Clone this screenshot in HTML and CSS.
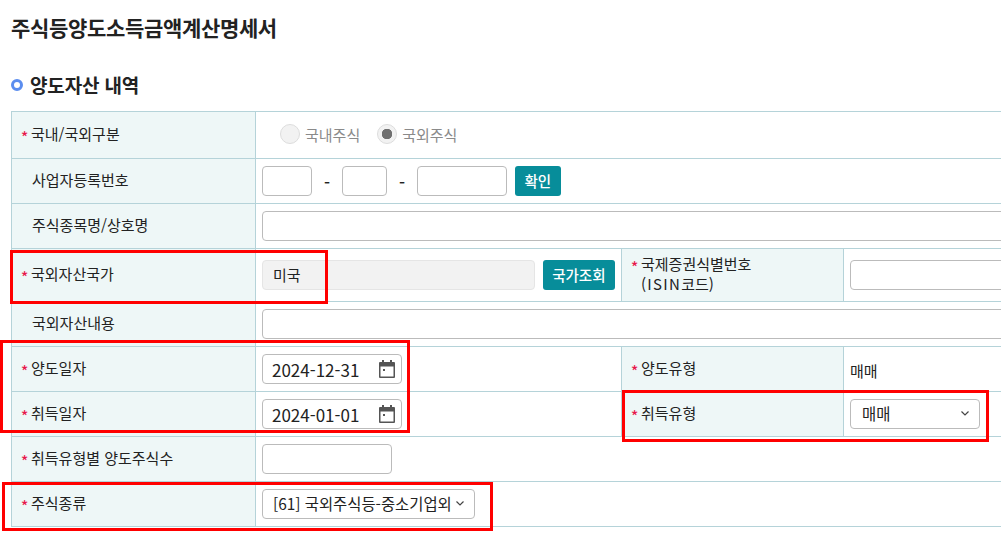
FILE: index.html
```html
<!DOCTYPE html>
<html lang="ko">
<head>
    <meta charset="UTF-8">
    <meta name="viewport" content="width=device-width, initial-scale=1.0">
    <title>주식등양도소득금액계산명세서</title>
    <link rel="stylesheet" href="styles.css">
</head>
<body>
    <h1 class="page-title">주식등양도소득금액계산명세서</h1>
    <h2 class="section-title"><span class="section-dot"></span>양도자산 내역</h2>

    <div class="table-wrap">
    <table class="form-table">
        <colgroup>
            <col class="col-th1">
            <col class="col-td1">
            <col class="col-th2">
            <col>
        </colgroup>
        <tr class="row-first">
            <th><span class="req">*</span>국내/국외구분</th>
            <td colspan="3">
                <div class="radio-group">
                    <label class="radio-item"><input type="radio" name="gubun" disabled>국내주식</label>
                    <label class="radio-item"><input type="radio" name="gubun" checked disabled>국외주식</label>
                </div>
            </td>
        </tr>
        <tr>
            <th class="no-req">사업자등록번호</th>
            <td colspan="3">
                <div class="biz-no">
                    <input class="input w-50" type="text">
                    <span class="dash">-</span>
                    <input class="input w-45" type="text">
                    <span class="dash">-</span>
                    <input class="input w-90" type="text">
                    <button class="btn" type="button">확인</button>
                </div>
            </td>
        </tr>
        <tr>
            <th class="no-req">주식종목명/상호명</th>
            <td colspan="3"><input class="input w-full" type="text"></td>
        </tr>
        <tr class="row-tall">
            <th><span class="req">*</span>국외자산국가</th>
            <td>
                <div class="country">
                    <input class="input input-readonly" type="text" value="미국" readonly>
                    <button class="btn" type="button">국가조회</button>
                </div>
            </td>
            <th class="th-wrap"><span class="req">*</span>국제증권식별번호<br><span class="latin-wide">(ISIN</span>코드)</th>
            <td><input class="input w-full" type="text"></td>
        </tr>
        <tr>
            <th class="no-req">국외자산내용</th>
            <td colspan="3"><input class="input w-full" type="text"></td>
        </tr>
        <tr>
            <th><span class="req">*</span>양도일자</th>
            <td>
                <div class="date-field">
                    <input type="text" value="2024-12-31">
                    <svg width="16" height="18" viewBox="0 0 16 18"><path fill="#555" d="M3 0h2v2h6V0h2v2h2a1 1 0 0 1 1 1v14a1 1 0 0 1-1 1H1a1 1 0 0 1-1-1V3a1 1 0 0 1 1-1h2zM1.500 6.500v10h13v-10z"/><rect x="4" y="9" width="2" height="2" fill="#555"/></svg>
                </div>
            </td>
            <th><span class="req">*</span>양도유형</th>
            <td><span class="plain-value">매매</span></td>
        </tr>
        <tr>
            <th><span class="req">*</span>취득일자</th>
            <td>
                <div class="date-field">
                    <input type="text" value="2024-01-01">
                    <svg width="16" height="18" viewBox="0 0 16 18"><path fill="#555" d="M3 0h2v2h6V0h2v2h2a1 1 0 0 1 1 1v14a1 1 0 0 1-1 1H1a1 1 0 0 1-1-1V3a1 1 0 0 1 1-1h2zM1.500 6.500v10h13v-10z"/><rect x="4" y="9" width="2" height="2" fill="#555"/></svg>
                </div>
            </td>
            <th><span class="req">*</span>취득유형</th>
            <td>
                <div class="select-field w-130">
                    <span>매매</span>
                    <svg width="8" height="5" viewBox="0 0 8 5"><path d="M.5.500L4 4 7.500.500" fill="none" stroke="#444" stroke-width="1.200"/></svg>
                </div>
            </td>
        </tr>
        <tr>
            <th><span class="req">*</span>취득유형별 양도주식수</th>
            <td colspan="3"><input class="input w-130" type="text"></td>
        </tr>
        <tr>
            <th><span class="req">*</span>주식종류</th>
            <td colspan="3">
                <div class="select-field select-wide">
                    <span>[61] 국외주식등-중소기업외</span>
                    <svg width="8" height="5" viewBox="0 0 8 5"><path d="M.5.500L4 4 7.500.500" fill="none" stroke="#444" stroke-width="1.200"/></svg>
                </div>
            </td>
        </tr>
    </table>
    </div>

    <!-- 빨간 표시 박스 -->
    <div class="mark mark-country"></div>
    <div class="mark mark-dates"></div>
    <div class="mark mark-type"></div>
    <div class="mark mark-kind"></div>
</body>
</html>
```

FILE: styles.css
```css
* {
    margin: 0;
    padding: 0;
    box-sizing: border-box;
}

html, body {
    width: 1001px;
    height: 541px;
    overflow: hidden;
}

body {
    position: relative;
    background: #fff;
    color: #222;
    font-family: "Noto Sans CJK KR", "Noto Sans", sans-serif;
    font-size: 15px;
    padding: 13px 0 0 11px;
}

/* Titles */
.page-title {
    font-size: 21px;
    font-weight: 700;
    line-height: 28px;
    letter-spacing: -0.33px;
    color: #222;
}

.section-title {
    display: flex;
    align-items: center;
    margin-top: 30px;
    font-size: 19px;
    font-weight: 700;
    line-height: 28px;
    letter-spacing: -0.15px;
    color: #222;
}

.section-dot {
    width: 12px;
    height: 12px;
    margin-right: 7px;
    border: 3px solid #5b8def;
    border-radius: 50%;
}

/* Table */
.table-wrap {
    width: 990px;
    margin-top: 12px;
    overflow: hidden;
}

.form-table {
    width: 1100px;
    table-layout: fixed;
    border-collapse: collapse;
    border-top: 1px solid #b5d3d9;
}

.col-th1 { width: 244px; }
.col-td1 { width: 366px; }
.col-th2 { width: 222px; }

.form-table tr {
    height: 45px;
}

.form-table .row-first { height: 47px; }
.form-table .row-tall { height: 53px; }

.form-table th,
.form-table td {
    border: 1px solid #b5d3d9;
    vertical-align: middle;
}

.form-table th {
    padding: 0 0 3px 19px;
    background: #eef7f7;
    font-weight: 400;
    font-size: 15px;
    line-height: 20px;
    text-align: left;
    color: #222;
}

.form-table th.no-req {
    padding-left: 20px;
}

.form-table td {
    padding: 0 6px;
}

.req {
    display: inline-block;
    width: 10px;
    margin-left: -10px;
    color: #e8174b;
    font-size: 15px;
    font-weight: 500;
    line-height: 14px;
    vertical-align: -3px;
}

.latin-wide {
    letter-spacing: 1.3px;
}

/* Inputs */
.input {
    display: block;
    height: 30px;
    padding: 0 10px 2px;
    border: 1px solid #bbb;
    border-radius: 4px;
    background: #fff;
    font: inherit;
    color: #222;
}

.w-50 { width: 50px; }
.w-45 { width: 45px; }
.w-90 { width: 90px; }
.w-130 { width: 130px; }
.w-full { width: 100%; }

.input-readonly {
    flex: 1;
    min-width: 0;
    border-color: #e5e5e5;
    background: #f2f2f2;
}

.btn {
    height: 30px;
    padding: 0 9.500px 2px;
    border: none;
    border-radius: 3px;
    background: #078d9a;
    color: #fff;
    font: inherit;
    font-weight: 500;
    font-size: 14.500px;
}

.biz-no {
    display: flex;
    align-items: center;
}

.dash {
    width: 30px;
    padding-top: 2px;
    text-align: center;
    font-size: 17px;
    font-weight: 500;
    line-height: 20px;
}

.biz-no .btn {
    margin-left: 8px;
}

.country {
    display: flex;
    align-items: center;
    gap: 8px;
}

/* Radios */
.radio-group {
    display: flex;
    gap: 17px;
    padding-left: 18px;
    padding-bottom: 2px;
}

.radio-item {
    display: flex;
    align-items: center;
    gap: 5px;
    color: #8a8a8a;
}

.radio-item input {
    appearance: none;
    width: 20px;
    height: 20px;
    border: 1px solid #ddd;
    border-radius: 50%;
    background: #f2f2f2;
}

.radio-item input:checked {
    background: radial-gradient(circle, #707070 0 5px, #f2f2f2 5.500px);
}

/* Date + select */
.date-field,
.select-field {
    display: flex;
    align-items: center;
    justify-content: space-between;
    height: 30px;
    border: 1px solid #bbb;
    border-radius: 4px;
    background: #fff;
}

.date-field {
    width: 140px;
    padding: 0 6px 0 9px;
}

.date-field input {
    width: 100px;
    border: none;
    outline: none;
    font: inherit;
    font-size: 17px;
    color: #222;
}

.select-field {
    padding: 0 10px 2px 11px;
    font-size: 15.400px;
}

.select-wide {
    width: 213px;
    padding-left: 10px;
}

.plain-value {
    display: block;
    padding-top: 2px;
}

/* Red annotation boxes */
.mark {
    position: absolute;
    border: 3px solid #f00;
    pointer-events: none;
}

.mark-country { left: 10px; top: 250px; width: 318px; height: 54px; }
.mark-dates { left: 0; top: 340px; width: 410px; height: 93px; }
.mark-type { left: 622px; top: 390px; width: 367px; height: 52px; }
.mark-kind { left: 2px; top: 482px; width: 491px; height: 49px; }
```
